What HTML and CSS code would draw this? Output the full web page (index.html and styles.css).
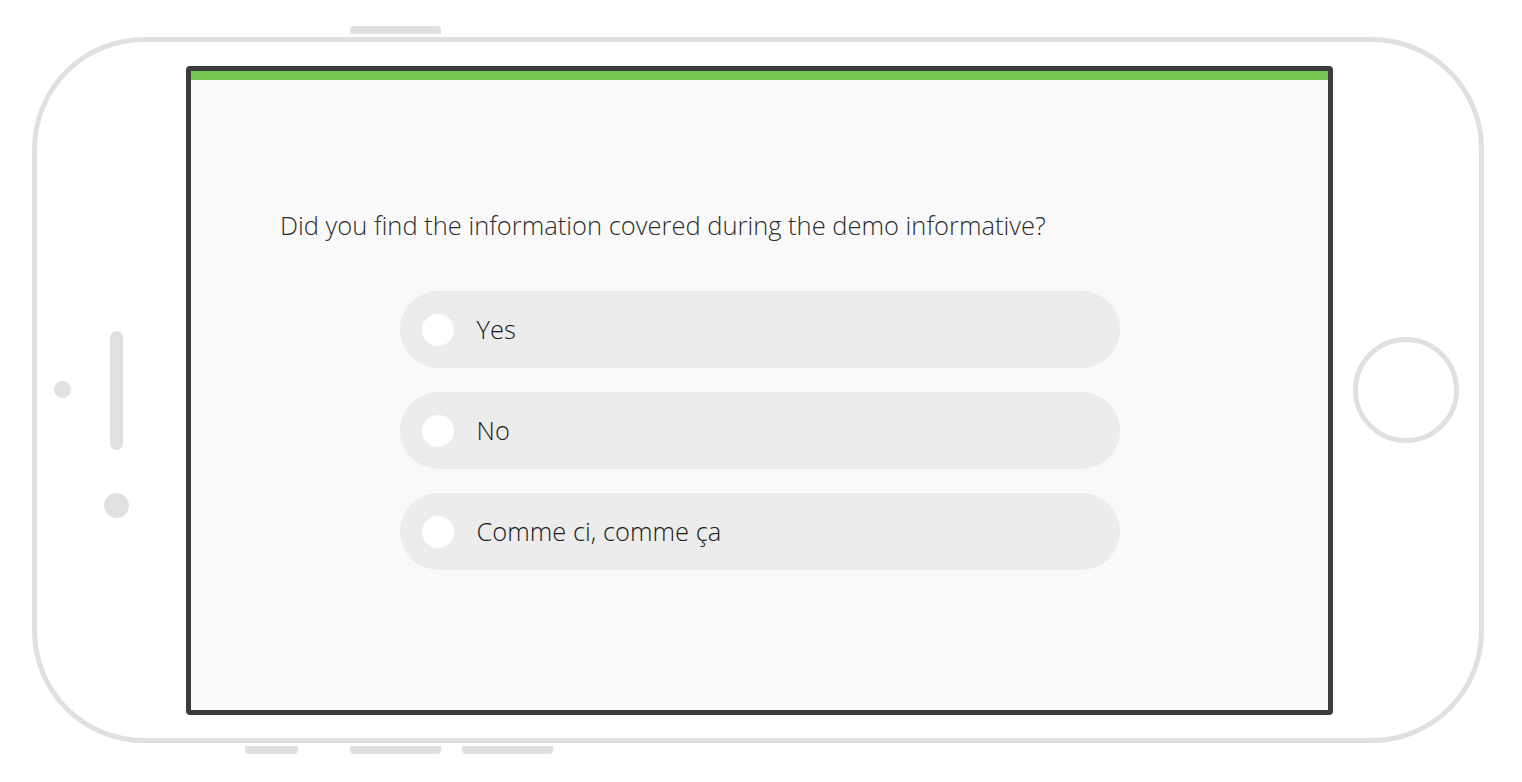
FILE: index.html
```html
<!DOCTYPE html>
<html lang="en">
<head>
<meta charset="utf-8">
<title>Survey</title>
<link rel="stylesheet" href="styles.css">
</head>
<body>
<div class="device">
  <div class="top-keys"><span class="key key-top"></span></div>
  <div class="phone">
    <div class="side">
      <span class="sensor"></span>
      <div class="side-col">
        <span class="speaker"></span>
        <span class="camera"></span>
      </div>
    </div>
    <div class="screen">
      <div class="progress"></div>
      <div class="content">
        <p class="question">Did you find the information covered during the demo informative?</p>
        <div class="options">
          <label class="option"><span class="radio"></span><span class="label">Yes</span></label>
          <label class="option"><span class="radio"></span><span class="label">No</span></label>
          <label class="option"><span class="radio"></span><span class="label">Comme ci, comme ça</span></label>
        </div>
      </div>
    </div>
    <div class="home-area"><span class="home"></span></div>
  </div>
  <div class="bottom-keys">
    <span class="key key-b1"></span>
    <span class="key key-b2"></span>
    <span class="key key-b3"></span>
  </div>
</div>
</body>
</html>
```
FILE: styles.css
```css
html, body {
  margin: 0;
  padding: 0;
  background: #ffffff;
}
body {
  font-family: "Open Sans", "Liberation Sans", sans-serif;
}
.device {
  padding: 26px 0 0 32px;
  width: 1452px;
}
.top-keys {
  display: flex;
  height: 8px;
  margin-bottom: 3px;
  padding-left: 318px;
}
.key {
  display: block;
  background: #e0e0e0;
  height: 8px;
}
.key-top {
  width: 91px;
  border-radius: 4px 4px 0 0;
}
.phone {
  box-sizing: border-box;
  width: 1452px;
  height: 706px;
  border: 5px solid #e0e0e0;
  border-radius: 112px;
  display: flex;
  align-items: flex-start;
}
.side {
  width: 149px;
  flex: none;
  display: flex;
  align-items: flex-start;
  padding-left: 17px;
  box-sizing: border-box;
}
.sensor {
  display: block;
  width: 17px;
  height: 17px;
  border-radius: 50%;
  background: #e0e0e0;
  margin-top: 339px;
}
.side-col {
  margin-left: 33px;
  width: 25px;
  display: flex;
  flex-direction: column;
  align-items: center;
  padding-top: 289px;
}
.speaker {
  display: block;
  width: 13px;
  height: 119px;
  border-radius: 7px;
  background: #e0e0e0;
}
.camera {
  display: block;
  width: 25px;
  height: 25px;
  border-radius: 50%;
  background: #e0e0e0;
  margin-top: 43px;
}
.screen {
  box-sizing: border-box;
  width: 1147px;
  height: 649px;
  margin-top: 24px;
  border: 5px solid #3c3c3c;
  border-radius: 4px;
  background: #f8f9f8;
  flex: none;
  display: flex;
  flex-direction: column;
}
.progress {
  height: 9px;
  background: #74c64e;
}
.content {
  width: 959px;
  margin: 0 auto;
  padding-top: 129px;
}
.question {
  margin: 0 0 50px;
  font-size: 25.5px;
  line-height: 32px;
  font-weight: 300;
  color: #2e2e2e;
}
.options {
  display: flex;
  flex-direction: column;
  align-items: center;
  gap: 24px;
}
.option {
  box-sizing: border-box;
  width: 720px;
  height: 77px;
  border-radius: 39px;
  background: #ebeceb;
  display: flex;
  align-items: center;
  padding-left: 22px;
}
.radio {
  width: 32px;
  height: 32px;
  border-radius: 50%;
  background: #ffffff;
  flex: none;
}
.label {
  margin-left: 23px;
  padding-bottom: 2px;
  font-size: 25.5px;
  line-height: 32px;
  font-weight: 300;
  color: #1a1a1a;
}
.home-area {
  flex: 1;
  display: flex;
  justify-content: center;
  padding-top: 295px;
}
.home {
  box-sizing: border-box;
  display: block;
  width: 106px;
  height: 106px;
  border-radius: 50%;
  border: 5px solid #e0e0e0;
}
.bottom-keys {
  display: flex;
  height: 9px;
  margin-top: 3px;
  padding-left: 213px;
}
.key-b1 {
  width: 53px;
  border-radius: 0 0 4px 4px;
}
.key-b2 {
  width: 91px;
  margin-left: 52px;
  border-radius: 0 0 4px 4px;
}
.key-b3 {
  width: 91px;
  margin-left: 21px;
  border-radius: 0 0 4px 4px;
}
```
